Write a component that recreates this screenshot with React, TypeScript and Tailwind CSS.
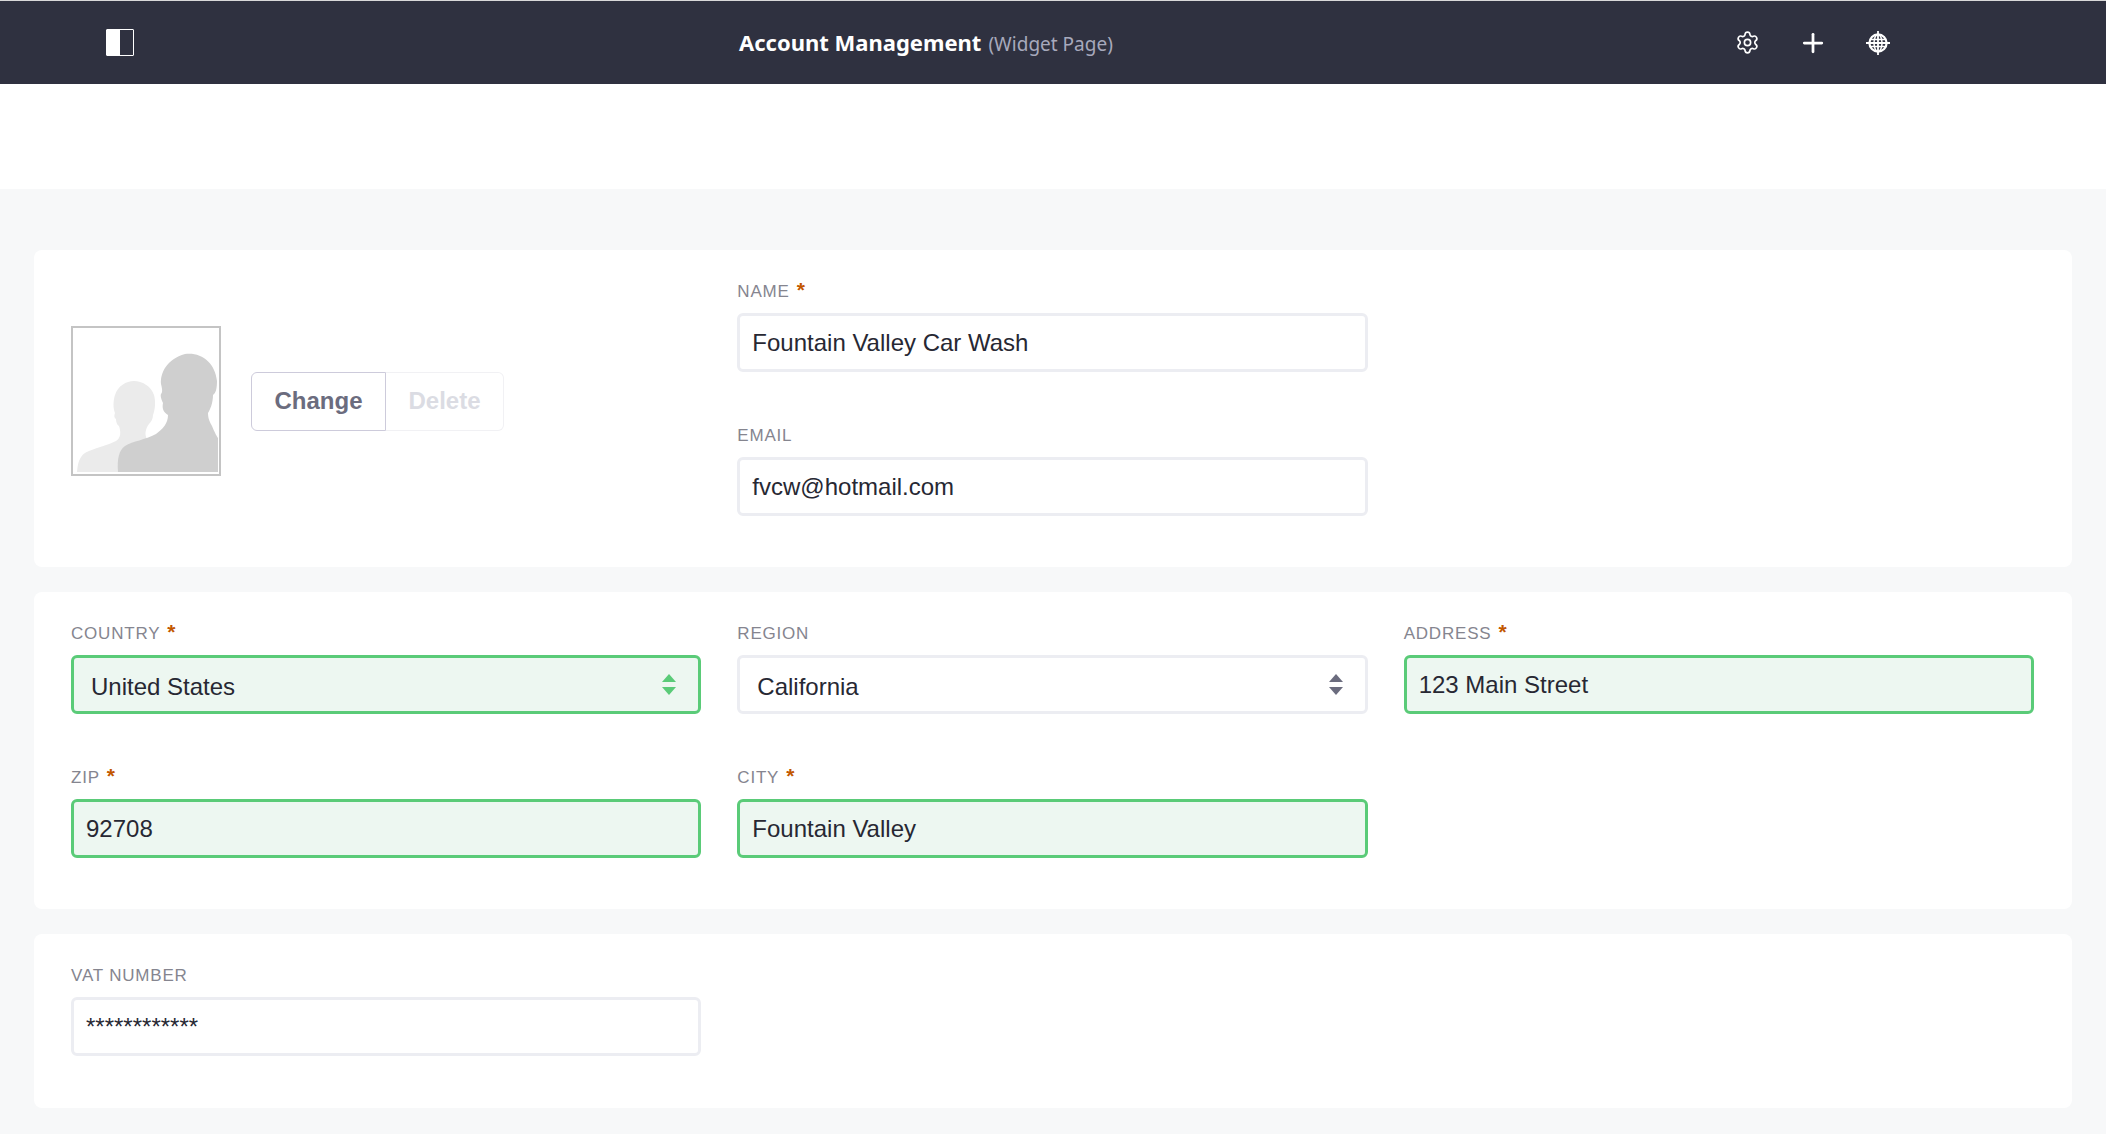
import { Plus, Settings } from "lucide-react";

const VALID_INPUT = "border-[#5acb78] bg-[#edf7f1]";
const PLAIN_INPUT = "border-[#ecedf2] bg-white";

function Field({ label, required, children }: { label: string; required?: boolean; children: React.ReactNode }) {
  return (
    <div>
      <div className="mb-[9px] flex h-[24px] items-center gap-[7px] text-[17px] tracking-[0.8px] text-[#85858f] uppercase">
        <span>{label}</span>
        {required && <span className="-mt-[5px] text-[21px] leading-none font-bold tracking-normal text-[#c25700]">*</span>}
      </div>
      {children}
    </div>
  );
}

function TextInput({ value, valid }: { value: string; valid?: boolean }) {
  return (
    <input
      readOnly
      value={value}
      className={`block h-[59px] w-full rounded-[6px] border-[3px] px-[12px] text-[24px] text-[#272833] outline-none ${valid ? VALID_INPUT : PLAIN_INPUT}`}
    />
  );
}

function SelectInput({ value, valid }: { value: string; valid?: boolean }) {
  return (
    <div className="relative">
      <select
        defaultValue={value}
        className={`block h-[59px] w-full appearance-none rounded-[6px] border-[3px] pt-[5px] pl-[17px] text-[24px] text-[#272833] outline-none ${valid ? VALID_INPUT : PLAIN_INPUT}`}
      >
        <option>{value}</option>
      </select>
      <svg viewBox="0 0 14 21" className={`absolute top-[19px] right-[25px] h-[21px] w-[14px] ${valid ? "fill-[#5acb78]" : "fill-[#6b6c7e]"}`}>
        <path d="M7 0l7 8H0zM0 13h14l-7 8z" />
      </svg>
    </div>
  );
}

function Avatar() {
  return (
    <div className="h-[150px] w-[150px] shrink-0 border-2 border-[#c4c4c4] bg-white">
      <svg viewBox="0 0 146 146" className="h-full w-full">
        <path
          d="M4 144c1-12 4-18 12-21 10-4 19-6 27-10 5-3 5-9 3-15-2-1-3-4-3-7-2-1-2-4-1-6-2-4-2-12 0-18 3-9 11-14 19-14s17 5 20 14c2 7 1 15-1 20 0 4-2 7-4 9-3 4-5 10-2 15 4 5 9 8 14 11v22z"
          fill="#ebebeb"
        />
        <path
          d="M45 144c-1-13 1-22 7-26 8-5 20-6 31-12 7-5 12-11 12-19-5-3-6-7-5-12-1-2-3-7-2-9 2-2 1-6 0-10-1-11 6-25 24-30 17-2 30 9 32 27 0 7-1 12-4 14 0 8-3 15-5 18 0 6 2 9 4 13 3 7 4 9 6 12v34z"
          fill="#cfcfcf"
        />
      </svg>
    </div>
  );
}

function SidebarToggle() {
  return (
    <div className="flex h-[27px] w-[28px] rounded-[1px] border border-white">
      <div className="w-[13px] bg-white" />
    </div>
  );
}

function SiteIcon() {
  return (
    <svg viewBox="0 0 24 24" className="h-[24px] w-[24px] fill-none stroke-white" strokeWidth="1.8">
      <circle cx="12" cy="12" r="8.6" strokeWidth="2.2" />
      <ellipse cx="12" cy="12" rx="4" ry="8.6" strokeWidth="1.5" />
      <path d="M12 0v24M0 12h24" strokeWidth="1.8" />
      <path d="M4 8.5h16M4 15.5h16" strokeWidth="1.3" />
    </svg>
  );
}

export default function App() {
  return (
    <div className="min-h-[1134px] bg-[#f7f8f9] font-['Liberation_Sans',sans-serif]">
      <div className="h-[1px] bg-[#d9d9d9]" />
      <header className="flex h-[83px] items-center bg-[#2f3140] pr-[216px] pl-[106px]">
        <SidebarToggle />
        <div className="ml-[605px] flex items-baseline gap-[7px] font-['Noto_Sans',sans-serif]">
          <span className="text-[22px] font-bold text-white">Account Management</span>
          <span className="text-[19px] text-[#a7a9bc]">(Widget Page)</span>
        </div>
        <div className="ml-auto flex items-center gap-[38px]">
          <Settings size={25} strokeWidth={1.6} className="text-white" />
          <Plus size={30} strokeWidth={2.2} className="text-white" />
          <SiteIcon />
        </div>
      </header>
      <div className="h-[105px] bg-white" />

      <main className="flex flex-col gap-[25px] px-[34px] pt-[61px]">
        <section className="grid grid-cols-3 gap-x-[36px] gap-y-[52px] rounded-[8px] bg-white pt-[30px] pr-[38px] pb-[51px] pl-[37px]">
          <div className="row-span-2 flex items-center pt-[6px]">
            <Avatar />
            <div className="ml-[30px] flex h-[59px]">
              <button className="w-[135px] rounded-l-[6px] border border-[#cdcbdb] text-[24px] font-bold text-[#6b6c7e]">Change</button>
              <button className="w-[118px] rounded-r-[6px] border border-l-0 border-[#f1f1f4] text-[24px] font-bold text-[#dbdce3]">Delete</button>
            </div>
          </div>
          <Field label="Name" required>
            <TextInput value="Fountain Valley Car Wash" />
          </Field>
          <div className="row-span-2" />
          <Field label="Email">
            <TextInput value="fvcw@hotmail.com" />
          </Field>
        </section>

        <section className="grid grid-cols-3 gap-x-[36px] gap-y-[52px] rounded-[8px] bg-white pt-[30px] pr-[38px] pb-[51px] pl-[37px]">
          <Field label="Country" required>
            <SelectInput value="United States" valid />
          </Field>
          <Field label="Region">
            <SelectInput value="California" />
          </Field>
          <Field label="Address" required>
            <TextInput value="123 Main Street" valid />
          </Field>
          <Field label="Zip" required>
            <TextInput value="92708" valid />
          </Field>
          <Field label="City" required>
            <TextInput value="Fountain Valley" valid />
          </Field>
        </section>

        <section className="grid grid-cols-3 gap-x-[36px] rounded-[8px] bg-white pt-[30px] pr-[38px] pb-[52px] pl-[37px]">
          <Field label="VAT Number">
            <TextInput value="************" />
          </Field>
        </section>
      </main>
    </div>
  );
}
